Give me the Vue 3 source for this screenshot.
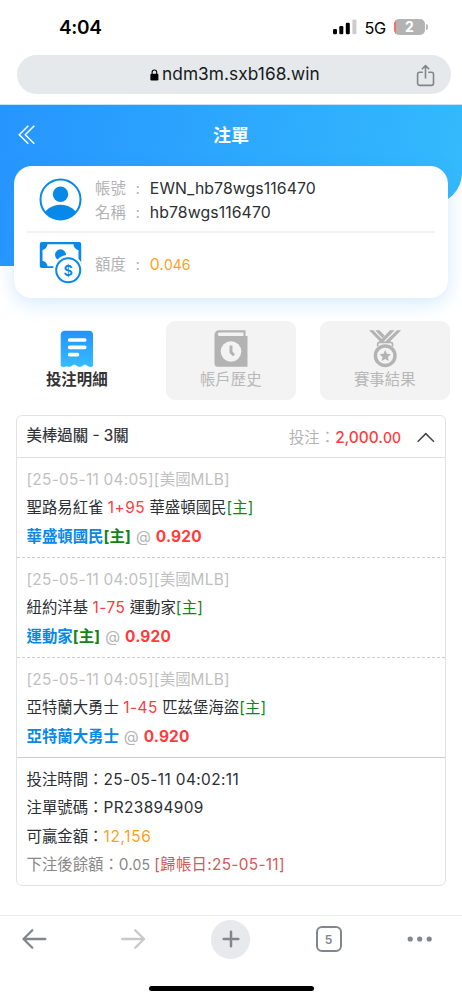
<script setup>
const bets = [
  { away: '聖路易紅雀', odds: '1+95', home: '華盛頓國民', pick: '華盛頓國民', pickHome: true },
  { away: '紐約洋基', odds: '1-75', home: '運動家', pick: '運動家', pickHome: true },
  { away: '亞特蘭大勇士', odds: '1-45', home: '匹茲堡海盜', pick: '亞特蘭大勇士', pickHome: false },
]
</script>

<template>
  <div class="phone">
    <div class="status">
      <span class="time">4:04</span>
      <div class="status-right">
        <svg width="24" height="16" viewBox="0 0 24 16">
          <rect x="0" y="10" width="4" height="5.3" rx="1.2" />
          <rect x="6.3" y="7" width="4" height="8.3" rx="1.2" />
          <rect x="12.8" y="3.7" width="4" height="11.6" rx="1.2" />
          <rect x="19.4" y="0.6" width="4" height="14.7" rx="1.2" fill="#ccc" />
        </svg>
        <span class="net">5G</span>
        <span class="battery">2</span>
        <span class="battery-tip"></span>
      </div>
    </div>

    <div class="address">
      <svg class="lock" width="9" height="12" viewBox="0 0 9 12">
        <rect x="0.4" y="4.7" width="8" height="6.7" rx="1.2" />
        <path d="M2.1 5.2V3.3a2.3 2.3 0 0 1 4.6 0v1.9" fill="none" stroke="#000" stroke-width="1.1" />
      </svg>
      <span class="url">ndm3m.sxb168.win</span>
      <svg class="share" width="20" height="24" viewBox="0 0 20 24" fill="none" stroke="#80868b" stroke-width="1.6" stroke-linecap="round" stroke-linejoin="round">
        <path d="M6.3 8.2H3.6a2 2 0 0 0-2 2v9a2.2 2.2 0 0 0 2.2 2.2h11.5a2.2 2.2 0 0 0 2.2-2.2v-9a2 2 0 0 0-2-2h-2.7M9.500 14V2M6.300 4.800 9.500 1.600l3.200 3.200" />
      </svg>
    </div>

    <div class="hero">
      <div class="hero-bg"></div>
      <div class="titlebar">
        <svg class="back" width="18" height="20" viewBox="0 0 18 20" fill="none" stroke="#fff" stroke-width="1.5">
          <path d="M10.300.7 1.300 9.700l9 9M16.300.7l-9 9 9 9" />
        </svg>
        <h1>注單</h1>
      </div>
      <section class="card">
        <div class="row user">
          <svg class="icon" width="43" height="43" viewBox="0 0 43 43">
            <defs><clipPath id="face"><circle cx="21.5" cy="21.5" r="20" /></clipPath></defs>
            <circle cx="21.5" cy="21.5" r="20" fill="#fff" stroke="#0689e8" stroke-width="2" />
            <circle cx="21.5" cy="16.2" r="7.7" fill="#0689e8" />
            <ellipse cx="21.5" cy="40" rx="17" ry="13.3" fill="#0689e8" clip-path="url(#face)" />
          </svg>
          <div class="fields">
            <p><span class="label">帳號</span><span class="colon">:</span><span class="value">EWN_hb78wgs116470</span></p>
            <p><span class="label">名稱</span><span class="colon">:</span><span class="value">hb78wgs116470</span></p>
          </div>
        </div>
        <div class="row money">
          <svg class="icon" width="43" height="44" viewBox="0 0 43 44">
            <rect x=".8" y="1" width="41.4" height="26" rx="2" fill="#0689e8" />
            <path d="M8.500 3.300h26q0 4 5 6v10q-5 1-6 6h-25q-.5-4.500-5-5.500V9q4.500-1.200 5-5.700z" fill="#fff" />
            <circle cx="21.500" cy="13.800" r="5.500" fill="#0689e8" />
            <circle cx="29.200" cy="29.300" r="15.200" fill="#fff" />
            <circle cx="29.200" cy="29.300" r="12" fill="#fff" stroke="#0689e8" stroke-width="2" />
            <text x="29.200" y="34.500" text-anchor="middle" fill="#0689e8" font-size="14.500" font-weight="600" font-family="Inter, sans-serif">$</text>
          </svg>
          <p><span class="label">額度</span><span class="colon">:</span><span class="credit">0.<small>046</small></span></p>
        </div>
      </section>
    </div>

    <nav class="tabs">
      <div class="tab active">
        <svg width="34" height="38" viewBox="0 0 34 38">
          <defs><linearGradient id="bill" x1="0" y1="0" x2="0" y2="1"><stop offset="0" stop-color="#2492ff" /><stop offset="1" stop-color="#35bdff" /></linearGradient></defs>
          <path d="M5 .7h24a4 4 0 0 1 4 4V36q-2.200 2-5.300 0-2.700-3.200-5.400 0-2.700 1.700-5.300 0-2.700-3.200-5.400 0-2.700 1.700-5.300 0Q9 34 6.800 36 3.500 38.200.7 36V4.700a4 4 0 0 1 4.300-4z" fill="url(#bill)" />
          <path d="M9.700 10h15M9.700 17.300h15M9.700 24.600h7.800" stroke="#fff" stroke-width="3.700" stroke-linecap="round" />
        </svg>
        <span>投注明細</span>
      </div>
      <div class="tab">
        <svg width="34" height="38" viewBox="0 0 34 38">
          <path d="M5.200.3H31.500V6H33.500v30.800H4a3.500 3.500 0 0 1-3.500-3.500V4.800A4.600 4.600 0 0 1 5.200.3z" fill="#b3b3b3" />
          <path d="M5.500 2.500H29.500V6H5.500a1.750 1.750 0 0 1 0-3.500z" fill="#f3f3f3" />
          <circle cx="17" cy="21.500" r="10.300" fill="#f3f3f3" />
          <path d="M17 15.500v6.700l3 3" fill="none" stroke="#b3b3b3" stroke-width="3" />
        </svg>
        <span>帳戶歷史</span>
      </div>
      <div class="tab">
        <svg width="34" height="38" viewBox="0 0 34 38" fill="none" stroke="#b3b3b3">
          <path d="M1 .3h4.200l9 9.200-1.900 2.300zM7.200.3h4.200l5.200 5.200-2.300 2.500zM29 .3h4.200L21.500 12h-4.700zM22 .3h4.700L15.200 12h-4.400z" fill="#b3b3b3" stroke="none" />
          <path d="M9.700 16.500v-2.200a2 2 0 0 1 2-2h10.800a2 2 0 0 1 2 2v2.200" fill="#f3f3f3" stroke-width="1.700" />
          <circle cx="17.200" cy="25.700" r="9.800" fill="#f3f3f3" stroke-width="3.500" />
          <path d="m17.200 20 1.700 3.700 4 .5-3 2.700.8 4-3.500-2-3.500 2 .8-4-3-2.700 4-.5z" fill="#b3b3b3" stroke="none" />
        </svg>
        <span>賽事結果</span>
      </div>
    </nav>

    <section class="slip">
      <header>
        <strong>美棒過關 - 3關</strong>
        <span class="stake">投注：<b>2,000.<small>00</small></b></span>
        <svg width="18" height="11" viewBox="0 0 18 11" fill="none" stroke="#444" stroke-width="1.500"><path d="m.7 9.800 8.100-8.200 8.100 8.200" /></svg>
      </header>
      <article v-for="bet in bets" :key="bet.away">
        <p class="when"><span class="num">[25-05-11 04:05][</span>美國<span class="num">MLB]</span></p>
        <p>{{ bet.away }} <span class="odds">{{ bet.odds }}</span> {{ bet.home }}<span class="home">[主]</span></p>
        <p class="pick">{{ bet.pick }}<span v-if="bet.pickHome" class="home">[主]</span> <span class="at">@</span> <span class="price">0.920</span></p>
      </article>
      <footer>
        <p>投注時間：<span class="num">25-05-11 04:02:11</span></p>
        <p>注單號碼：<span class="num">PR23894909</span></p>
        <p>可贏金額：<span class="win">12,156</span></p>
        <p class="rest">下注後餘額：0.<small>05</small> <span class="due">[歸帳日:25-05-11]</span></p>
      </footer>
    </section>

    <div class="toolbar">
      <div class="buttons">
        <svg class="prev" width="26" height="22" viewBox="0 0 26 22" fill="none" stroke="#80868b" stroke-width="2.300" stroke-linecap="round" stroke-linejoin="round"><path d="M24.300 11H2.500M11.300 2.300 2.500 11l8.800 8.700" /></svg>
        <svg width="26" height="22" viewBox="0 0 26 22" fill="none" stroke="#c8c8c8" stroke-width="2.300" stroke-linecap="round" stroke-linejoin="round"><path d="M2.200 11H24M15.200 2.300 24 11l-8.800 8.700" /></svg>
        <span class="plus"><svg width="20" height="20" viewBox="0 0 20 20" stroke="#80868b" stroke-width="2.500" stroke-linecap="round"><path d="M10 2.700v14.600M2.700 10h14.600" /></svg></span>
        <span class="count">5</span>
        <svg width="26" height="8" viewBox="0 0 26 8" fill="#80868b"><circle cx="3.200" cy="4" r="2.600" /><circle cx="12.700" cy="4" r="2.600" /><circle cx="22.200" cy="4" r="2.600" /></svg>
      </div>
      <div class="indicator"></div>
    </div>
  </div>
</template>

<style>
body { margin: 0; background: #fff; }
</style>

<style scoped>
* { box-sizing: border-box; }
p, h1 { margin: 0; }
svg { display: block; flex: none; }
.phone { width: 462px; height: 1000px; overflow: hidden; display: flex; flex-direction: column; background: #fff; color: #2c2f33; font: 15.4px/28.4px Inter, "Noto Sans CJK TC", sans-serif; white-space: nowrap; }
.status { height: 55px; flex: none; display: flex; justify-content: space-between; padding: 0 34px 0 59px; color: #000; }
.time { font-size: 19px; font-weight: 600; line-height: 56px; letter-spacing: -.3px; }
.status-right { display: flex; align-items: center; height: 54px; }
.net { font-size: 16.3px; margin: 2px 0 0 7.500px; font-weight: 400; letter-spacing: -.3px; width: 29.500px; }
.battery { width: 31px; height: 16px; border-radius: 5px; background: linear-gradient(90deg, #f47068 2px, #b3b3b3 2px); color: #fff; font-size: 14px; font-weight: 700; line-height: 16px; text-align: center; }
.battery-tip { width: 2px; height: 6px; border-radius: 0 2px 2px 0; background: #b8b8b8; margin-left: 1px; }
.address { height: 39px; flex: none; margin: 0 11px 10px 17px; border-radius: 20px; background: #e6e9ec; display: flex; align-items: center; color: #17191b; }
.lock { margin-left: 133px; margin-top: 0; }
.url { font-size: 17.3px; margin-left: 3px; letter-spacing: .06px; width: 162px; }
.share { margin-left: auto; margin-right: 15px; margin-top: 2px; }
.hero { position: relative; height: 217px; flex: none; border-top: 1px solid #c5e2f6; }
.hero-bg { position: absolute; inset: 0 0 55px 0; background: linear-gradient(100deg, #2695ff, #34bbfc); clip-path: path("M0 0H462V68A31 31 0 0 1 431 99L400 161H0Z"); }
.titlebar { position: relative; height: 61px; }
.back { position: absolute; left: 17.500px; top: 19.500px; }
h1 { text-align: center; color: #fff; font-size: 18px; line-height: 62px; font-weight: 700; }
.card { position: relative; margin: 0 14px; height: 132px; border-radius: 18px; background: #fff; box-shadow: 0 5px 20px rgba(40,145,245,.2); padding: 0 13px; }
.row { display: flex; align-items: center; padding-left: 12px; }
.row .icon { margin-right: 13px; }
.user { height: 67px; padding-top: 2px; border-bottom: 2px solid #f2f2f2; }
.user .fields { padding-top: 2px; }
.user p { line-height: 24px; }
.money { height: 62px; }
.money .icon { margin-top: -2px; }
.money p { padding-top: 2px; }
.row p { display: flex; }
.label { color: #b3b3b3; width: 30.8px; }
.colon { color: #b3b3b3; width: 24px; text-align: center; }
.value { color: #2c2f33; font-size: 15.8px; letter-spacing: .1px; }
.credit { color: #ff9f1a; font-size: 15.8px; }
small { font-size: 14px; }
.tabs { display: flex; gap: 24.500px; padding-left: 12px; height: 79px; flex: none; }
.tab { width: 129.500px; height: 79px; border-radius: 9px; background: #f3f3f3; display: flex; flex-direction: column; align-items: center; padding-top: 9px; color: #b8b8b8; line-height: 24px; }
.tab.active { background: none; color: #333; font-weight: 700; }
.slip { flex: none; margin: 15px 16px 0; height: 471px; border: 1.500px solid #dfe3e8; border-radius: 6px; }
.slip p { height: 28.4px; }
header { height: 42px; display: flex; align-items: center; padding: 0 11px 0 9.500px; border-bottom: 1px solid #dcdfe4; }
header strong { font-weight: 400; -webkit-text-stroke: .2px; word-spacing: 0; }
header svg { margin: 2px -.5px 0 .5px; }
.stake { margin: 3px 15px 0 auto; color: #b3b3b3; }
.stake b { color: #ff3b3b; font-weight: 500; }
article { height: 100px; padding: 8px 10px 0 9.500px; border-bottom: 1px dashed #ccc; }
article:nth-of-type(3) { border-bottom: 1px solid #ccc; }
.when { color: #bfbfbf; }
.when .num { letter-spacing: .26px; }
.num { letter-spacing: .39px; }
.odds, .price { color: #ff3b3b; }
.odds { letter-spacing: .5px; }
.home { color: #168216; letter-spacing: .2px; }
.pick { color: #0689e8; font-weight: 700; word-spacing: 1.300px; }
.at { color: #b3b3b3; font-weight: 400; }
.price { letter-spacing: .2px; }
footer { padding: 8px 9.500px; }
.win { color: #ff9f1a; letter-spacing: .7px; }
.rest { color: #888; }
.due { color: #d05a5a; letter-spacing: .3px; }
.toolbar { flex: none; margin-top: 29px; border-top: 1px solid #ebebeb; height: 85px; }
.buttons { display: flex; gap: 65.500px; align-items: center; padding-left: 21px; height: 46px; }
.prev { margin-right: 7px; }
.plus { width: 39px; height: 39px; flex: none; border-radius: 50%; background: #e8e9ed; display: grid; place-items: center; }
.count { width: 26px; height: 26px; flex: none; border: 2px solid #80868b; border-radius: 6px; color: #80868b; text-align: center; font-size: 12px; line-height: 23px; font-weight: 600; }
.indicator { width: 165px; height: 5px; border-radius: 3px; background: #000; margin: 24px 0 0 149px; }
</style>
